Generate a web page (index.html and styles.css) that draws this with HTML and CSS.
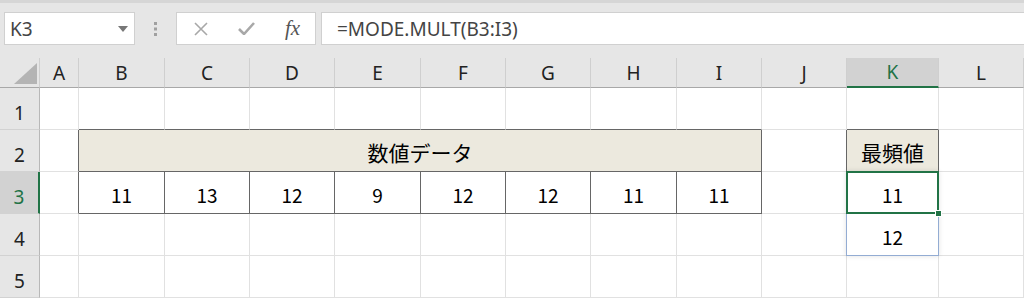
FILE: index.html
```html
<!DOCTYPE html>
<html>
<head>
    <title>MODE.MULT</title>
    <link rel="stylesheet" href="styles.css">
</head>
<body>
<div class="toolbar">
    <div class="namebox">
        <span>K3</span>
        <svg width="10" height="6" viewBox="0 0 10 6"><polygon points="0,0 10,0 5,6" fill="#777"/></svg>
    </div>
    <div class="grip">
        <svg width="3" height="14" viewBox="0 0 3 14">
            <rect x="0" y="0" width="3" height="3" fill="#a0a0a0"/>
            <rect x="0" y="5.5" width="3" height="3" fill="#a0a0a0"/>
            <rect x="0" y="11" width="3" height="3" fill="#a0a0a0"/>
        </svg>
    </div>
    <div class="fxbox">
        <svg width="14" height="14" viewBox="0 0 14 14"><path d="M1 1 L13 13 M13 1 L1 13" stroke="#a8a8a8" stroke-width="1.6" fill="none"/></svg>
        <svg width="17" height="13" viewBox="0 0 17 13"><path d="M1 7 L6 12 L16 1" stroke="#a8a8a8" stroke-width="2.6" fill="none"/></svg>
        <span class="fx">fx</span>
    </div>
    <div class="formula">=MODE.MULT(B3:I3)</div>
</div>

<div class="sheet">
    <!-- column headers -->
    <div class="c ch corner"><svg width="23" height="21" viewBox="0 0 23 21"><polygon points="23,0 23,21 0,21" fill="#b4b4b4"/></svg></div>
    <div class="c ch">A</div>
    <div class="c ch">B</div>
    <div class="c ch">C</div>
    <div class="c ch">D</div>
    <div class="c ch">E</div>
    <div class="c ch">F</div>
    <div class="c ch">G</div>
    <div class="c ch">H</div>
    <div class="c ch">I</div>
    <div class="c ch">J</div>
    <div class="c ch sel">K</div>
    <div class="c ch">L</div>

    <!-- row 1 -->
    <div class="c rh">1</div>
    <div class="c"></div>
    <div class="c bb"></div>
    <div class="c bb"></div>
    <div class="c bb"></div>
    <div class="c bb"></div>
    <div class="c bb"></div>
    <div class="c bb"></div>
    <div class="c bb"></div>
    <div class="c bb"></div>
    <div class="c"></div>
    <div class="c bb"></div>
    <div class="c"></div>

    <!-- row 2 -->
    <div class="c rh">2</div>
    <div class="c br"></div>
    <div class="c head br bb merged">数値データ</div>
    <div class="c br"></div>
    <div class="c head br bb">最頻値</div>
    <div class="c"></div>

    <!-- row 3 -->
    <div class="c rh sel">3</div>
    <div class="c br"></div>
    <div class="c br bb">11</div>
    <div class="c br bb">13</div>
    <div class="c br bb">12</div>
    <div class="c br bb">9</div>
    <div class="c br bb">12</div>
    <div class="c br bb">12</div>
    <div class="c br bb">11</div>
    <div class="c br bb">11</div>
    <div class="c"></div>
    <div class="c active">
        11
        <div class="spill"></div>
        <div class="cursor"><span class="handle"></span></div>
    </div>
    <div class="c"></div>

    <!-- row 4 -->
    <div class="c rh">4</div>
    <div class="c"></div>
    <div class="c"></div>
    <div class="c"></div>
    <div class="c"></div>
    <div class="c"></div>
    <div class="c"></div>
    <div class="c"></div>
    <div class="c"></div>
    <div class="c"></div>
    <div class="c"></div>
    <div class="c">12</div>
    <div class="c"></div>

    <!-- row 5 -->
    <div class="c rh">5</div>
    <div class="c"></div>
    <div class="c"></div>
    <div class="c"></div>
    <div class="c"></div>
    <div class="c"></div>
    <div class="c"></div>
    <div class="c"></div>
    <div class="c"></div>
    <div class="c"></div>
    <div class="c"></div>
    <div class="c"></div>
    <div class="c"></div>
</div>
</body>
</html>
```

FILE: styles.css
```css
* {
    box-sizing: border-box;
}

html, body {
    margin: 0;
    height: 100%;
    overflow: hidden;
}

body {
    width: 1024px;
    height: 299px;
    background-color: #ffffff;
    font-family: "Noto Sans", "Noto Sans CJK JP", sans-serif;
}

/* formula bar */
.toolbar {
    height: 58px;
    background-color: #e6e6e6;
    border-top: 3px solid #d6d6d6;
    padding: 9px 0 0 4px;
    display: flex;
    align-items: flex-start;
}

.namebox {
    width: 131px;
    height: 33px;
    background-color: #fff;
    border: 1px solid #d0d0d0;
    display: flex;
    align-items: center;
    justify-content: space-between;
    padding: 0 6px 0 5px;
    font-size: 19px;
    color: #444;
}

.grip {
    width: 41px;
    height: 33px;
    display: flex;
    align-items: center;
    justify-content: center;
}

.fxbox {
    width: 140px;
    height: 33px;
    background-color: #fff;
    border: 1px solid #d0d0d0;
    display: flex;
    align-items: center;
    gap: 30px;
    padding-left: 17px;
}

.fx {
    font-family: "Liberation Serif", "DejaVu Serif", serif;
    font-style: italic;
    font-size: 21px;
    color: #555;
    line-height: 1;
}

.formula {
    flex: 1;
    height: 33px;
    margin-left: 5px;
    background-color: #fff;
    border: 1px solid #d0d0d0;
    border-right: none;
    display: flex;
    align-items: center;
    padding-left: 15px;
    font-size: 19px;
    color: #444;
}

/* grid */
.sheet {
    display: grid;
    grid-template-columns: 40px 39px 86px 85px 85px 86px 85px 85px 86px 85px 85px 92px 85px;
    grid-template-rows: 30px repeat(5, 42px);
}

.c {
    border-right: 1px solid #e1e1e1;
    border-bottom: 1px solid #e1e1e1;
    display: flex;
    align-items: center;
    justify-content: center;
    padding-top: 4px;
    font-family: "Noto Sans CJK JP", sans-serif;
    font-size: 19px;
    color: #000;
}

.ch {
    background-color: #e6e6e6;
    border-right-color: #cfcfcf;
    border-bottom-color: #a8a8a8;
    padding-top: 0;
    font-family: "Noto Sans", sans-serif;
    color: #222;
}

.ch.sel {
    background-color: #d2d2d2;
    color: #217346;
    border-bottom: 2px solid #217346;
}

.corner {
    align-items: flex-end;
    justify-content: flex-end;
    padding: 0 2px 3px 0;
}

.rh {
    background-color: #e6e6e6;
    border-right-color: #b8b8b8;
    border-bottom-color: #d2d2d2;
    align-items: flex-end;
    padding: 0 0 3px 0;
    font-family: "Noto Sans", sans-serif;
    color: #222;
}

.rh.sel {
    background-color: #d2d2d2;
    color: #217346;
    border-right: 2px solid #217346;
}

.br {
    border-right-color: #666;
}

.bb {
    border-bottom-color: #666;
}

.head {
    background-color: #ece9de;
    font-size: 21px;
    padding-top: 2px;
}

.merged {
    grid-column: span 8;
}

/* selection */
.active {
    position: relative;
}

.spill {
    position: absolute;
    top: -1px;
    left: -1px;
    width: 93px;
    height: 85px;
    border: 1px solid #93acd3;
    box-shadow: 0 0 5px rgba(0, 0, 0, 0.12);
}

.cursor {
    position: absolute;
    top: -1px;
    left: -1px;
    right: -1px;
    bottom: -1px;
    border: 2px solid #217346;
}

.handle {
    position: absolute;
    right: -5px;
    bottom: -5px;
    width: 7px;
    height: 7px;
    background-color: #217346;
    border: 1px solid #fff;
}
```
